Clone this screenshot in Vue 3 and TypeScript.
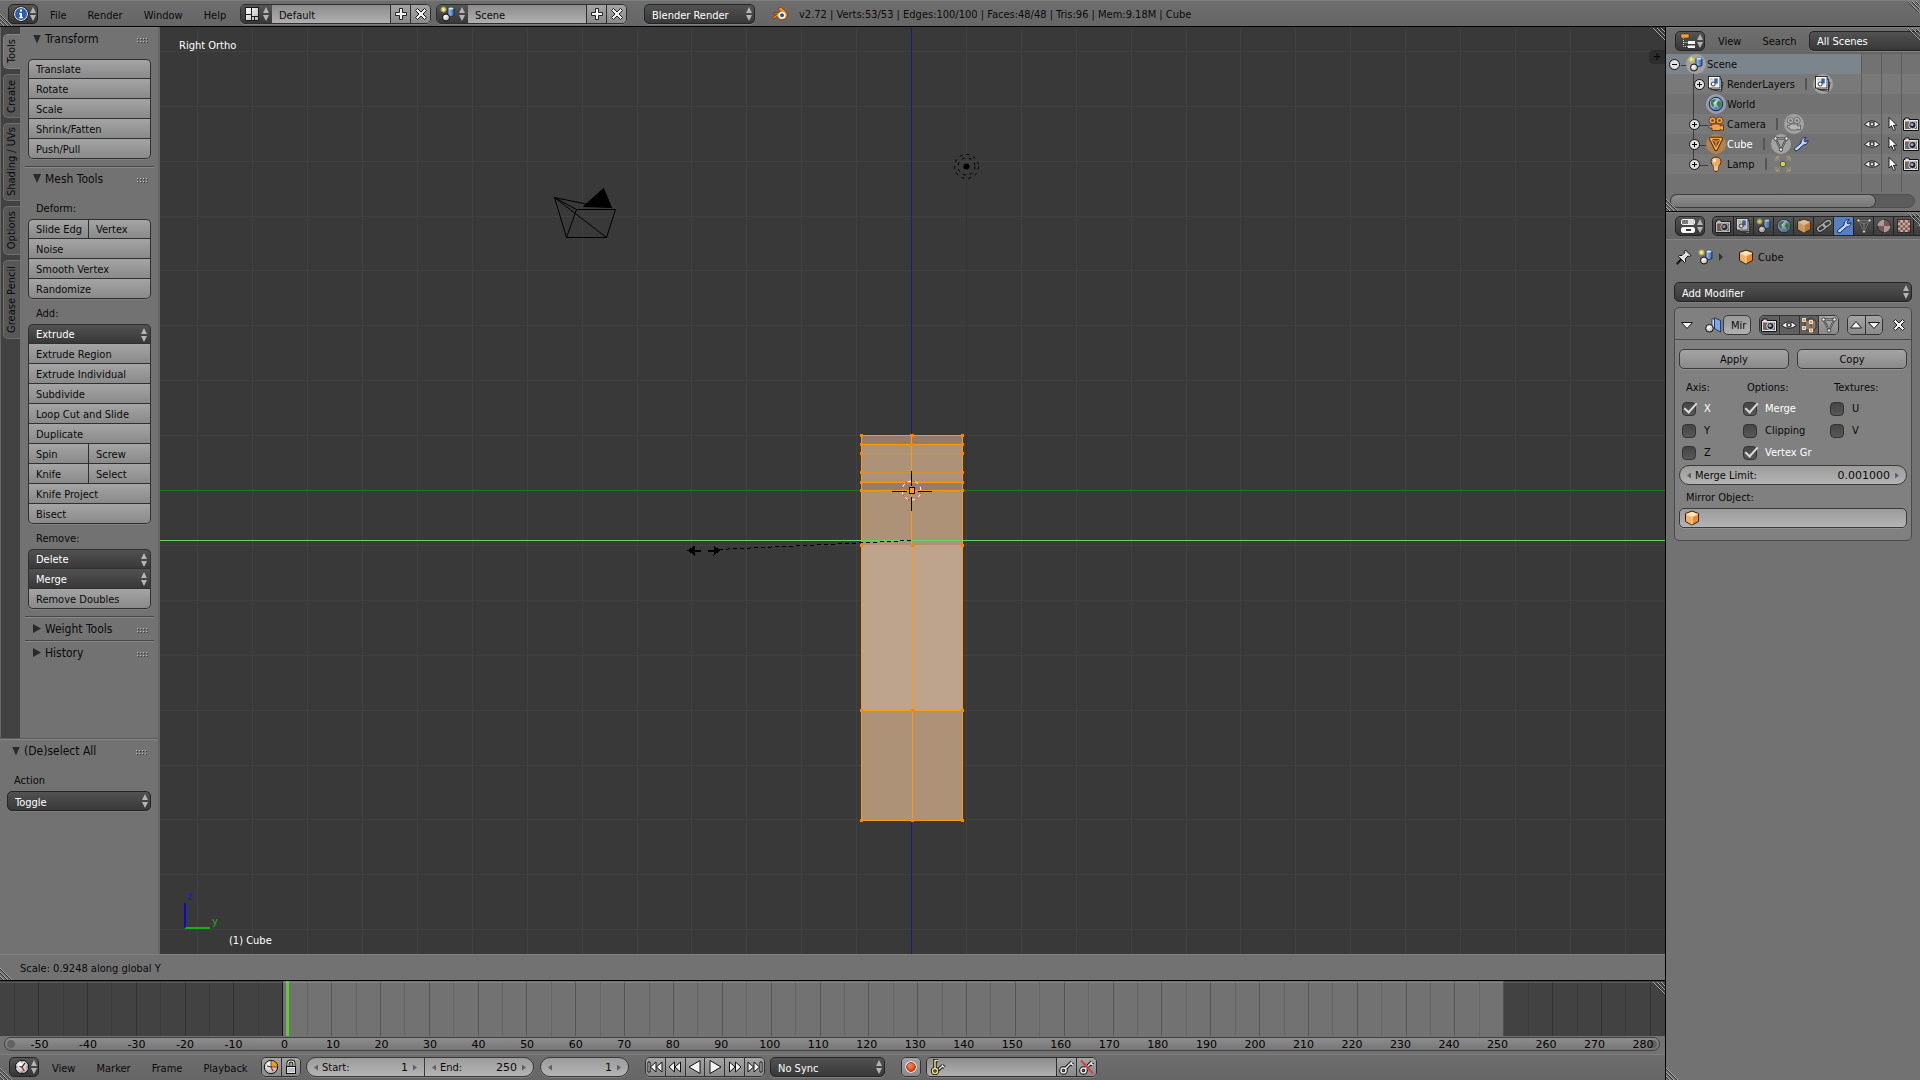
<script setup lang="ts">
import { ref } from 'vue'

interface ToolRow { cells: string[]; menu?: boolean }
interface ToolGroup { label?: string; rows: ToolRow[] }
interface TreeRow {
  name: string
  level: number
  toggle?: 'plus' | 'minus'
  near?: boolean
  icon: string
  halo?: string
  extras?: { icon: string; halo?: boolean }[]
  restrict?: boolean
  selected?: boolean
  bright?: boolean
}

const b = (...cells: string[]): ToolRow => ({ cells })
const m = (name: string): ToolRow => ({ cells: [name], menu: true })

const shelfTabs = [
  { name: 'Tools', size: 35, active: true },
  { name: 'Create', size: 44 },
  { name: 'Shading / UVs', size: 78 },
  { name: 'Options', size: 49 },
  { name: 'Grease Pencil', size: 79 },
]

const transform: ToolGroup[] = [
  { rows: [b('Translate'), b('Rotate'), b('Scale'), b('Shrink/Fatten'), b('Push/Pull')] },
]
const meshTools: ToolGroup[] = [
  { label: 'Deform:', rows: [b('Slide Edg', 'Vertex'), b('Noise'), b('Smooth Vertex'), b('Randomize')] },
  {
    label: 'Add:',
    rows: [
      m('Extrude'), b('Extrude Region'), b('Extrude Individual'), b('Subdivide'), b('Loop Cut and Slide'),
      b('Duplicate'), b('Spin', 'Screw'), b('Knife', 'Select'), b('Knife Project'), b('Bisect'),
    ],
  },
  { label: 'Remove:', rows: [m('Delete'), m('Merge'), b('Remove Doubles')] },
]
const panels = [
  { title: 'Transform', open: true, groups: transform },
  { title: 'Mesh Tools', open: true, groups: meshTools },
  { title: 'Weight Tools', open: false, groups: [] as ToolGroup[] },
  { title: 'History', open: false, groups: [] as ToolGroup[] },
]

const tree: TreeRow[] = [
  { name: 'Scene', level: 0, toggle: 'minus', icon: 'scene', halo: 'light', selected: true },
  { name: 'RenderLayers', level: 1, toggle: 'plus', near: true, icon: 'layers', extras: [{ icon: 'layers', halo: true }] },
  { name: 'World', level: 1, icon: 'world', halo: 'blue' },
  { name: 'Camera', level: 1, toggle: 'plus', icon: 'camera', extras: [{ icon: 'camera-data', halo: true }], restrict: true },
  { name: 'Cube', level: 1, toggle: 'plus', icon: 'mesh', halo: 'orange', bright: true, extras: [{ icon: 'mesh-data', halo: true }, { icon: 'wrench' }], restrict: true },
  { name: 'Lamp', level: 1, toggle: 'plus', icon: 'lamp', extras: [{ icon: 'lamp-data' }], restrict: true },
]

const propTabs = ['render', 'layers', 'scene', 'world', 'cube', 'link', 'wrench', 'mesh-data', 'material', 'texture', 'particles']

const axis = ref([{ name: 'X', on: true }, { name: 'Y', on: false }, { name: 'Z', on: false }])
const options = ref([{ name: 'Merge', on: true }, { name: 'Clipping', on: false }, { name: 'Vertex Gr', on: true }])
const textures = ref([{ name: 'U', on: false }, { name: 'V', on: false }])

const playback = ['first', 'prev-key', 'reverse', 'play', 'next-key', 'last']

/* Viewport grid, in pixels from the world origin */
const GRID = 54.9
const gridSteps = Array.from({ length: 61 }, (_, i) => Math.round((i - 30) * GRID)).filter((v) => v !== 0)

/* Mesh vertices drawn at the left edge, centre and right edge */
const vertexRows = [-55, -46, -37, -18, -8, 0, 55, 220, 330]

/* Timeline scale; the labels run on a slightly tighter pitch than the lines */
const FIRST = -57.9
const SPAN = 340.9
const at = (frame: number) => `${((frame - FIRST) / SPAN) * 100}%`
const labelAt = (frame: number) => `${(frame < 0 ? 16.94 : 17.09) + frame * 0.2914}%`
const minor = Array.from({ length: 34 }, (_, i) => -55 + i * 10)
const major = Array.from({ length: 34 }, (_, i) => -50 + i * 10)
</script>

<template>
  <svg class="defs" aria-hidden="true">
    <defs>
      <linearGradient id="g-blue" x1="0" x2="1"><stop offset="0" stop-color="#a9c9f5" /><stop offset="1" stop-color="#2f62b4" /></linearGradient>
      <linearGradient id="g-white" x1="0" y1="0" x2="1" y2="1"><stop offset="0" stop-color="#fff" /><stop offset="1" stop-color="#b5b5b5" /></linearGradient>
      <radialGradient id="g-ball" cx=".4" cy=".35" r=".7"><stop offset="0" stop-color="#fff" /><stop offset="1" stop-color="#a8a8a8" /></radialGradient>
      <radialGradient id="g-sun"><stop offset="0" stop-color="#fffbc0" /><stop offset=".5" stop-color="#d8cf50" /><stop offset="1" stop-color="#d8cf50" stop-opacity="0" /></radialGradient>
      <radialGradient id="g-world" cx=".4" cy=".35" r=".7"><stop offset="0" stop-color="#d4e6fb" /><stop offset="1" stop-color="#4672ab" /></radialGradient>
      <radialGradient id="g-red" cx=".4" cy=".35" r=".7"><stop offset="0" stop-color="#ff8a5c" /><stop offset="1" stop-color="#d62a00" /></radialGradient>
    </defs>

    <symbol id="i-updown" viewBox="0 0 8 14"><path d="M4 0 7 6H1ZM4 14 7 8H1Z" fill="#b4b4b4" /></symbol>
    <symbol id="i-grip" viewBox="0 0 12 12">
      <path d="M0 1 11 12M4 1 11 8M8 1 11 4" stroke="#303030" /><path d="M0 0 12 12M4 0 12 8M8 0 12 4" stroke="#a8a8a8" />
    </symbol>
    <symbol id="i-grip-bl" viewBox="0 0 12 12">
      <path d="M0 1 11 12M0 5 7 12M0 9 3 12" stroke="#303030" /><path d="M0 0 12 12M0 4 8 12M0 8 4 12" stroke="#a8a8a8" />
    </symbol>
    <symbol id="i-dots" viewBox="0 0 12 6">
      <path d="M0 1.5H12M0 4.5H12" stroke="#c0c0c0" stroke-dasharray="1 2" /><path d="M1 2.5H12M1 5.5H12" stroke="#3a3a3a" stroke-dasharray="1 2" />
    </symbol>
    <symbol id="i-info" viewBox="0 0 16 16">
      <circle cx="8" cy="8" r="6.500" fill="#2d5ea8" stroke="#fff" /><circle cx="8" cy="8" r="7.400" fill="none" stroke="#111" stroke-width=".6" />
      <path d="M7 3.500H9V5.500H7ZM6 7H9V11H10V12.300H6V11H7V8.300H6Z" fill="#fff" />
    </symbol>
    <symbol id="i-layout" viewBox="0 0 16 16">
      <rect x="1" y="1" width="14" height="14" fill="#1c1c1c" /><path d="M2 2H7V8H2ZM2 9H7V14H2ZM8 2H14V10H8ZM8 11H10V14H8ZM11 11H14V14H11Z" fill="url(#g-white)" />
    </symbol>
    <symbol id="i-scene" viewBox="0 0 16 16">
      <circle cx="3.500" cy="3.500" r="3.500" fill="url(#g-sun)" />
      <path d="M8 2.500Q11 .5 14 2.500V9.500Q11 12 8 9.500Z" fill="url(#g-blue)" stroke="#12264a" stroke-width=".8" /><ellipse cx="11" cy="2.600" rx="2.600" ry="1" fill="#dceaff" />
      <circle cx="6" cy="11.500" r="3.500" fill="url(#g-ball)" stroke="#111" />
    </symbol>
    <symbol id="i-plus" viewBox="0 0 16 16"><path d="M6.500 2.500H9.500V6.500H13.500V9.500H9.500V13.500H6.500V9.500H2.500V6.500H6.500Z" fill="#f4f4f4" stroke="#222" /></symbol>
    <symbol id="i-close" viewBox="0 0 16 16"><path d="M2.500 4.500 4.500 2.500 8 6 11.500 2.500 13.500 4.500 10 8 13.500 11.500 11.500 13.500 8 10 4.500 13.500 2.500 11.500 6 8Z" fill="#f0f0f0" stroke="#1a1a1a" /></symbol>
    <symbol id="i-blender" viewBox="0 0 16 16">
      <path d="M7 1.500 9 1 14.500 6Q16 8 15.500 10 14 14 10 14 6 14 5 10.500L2 13 .7 11.500 5 8H1.500L2 6.500H7.500L8.500 5.500 6.500 3.500Z" fill="#f08a1c" stroke="#5a2c00" stroke-width=".6" />
      <circle cx="10" cy="9.300" r="3.500" fill="#fff" /><circle cx="10" cy="9.300" r="2" fill="#1b5aa8" />
    </symbol>
    <symbol id="i-tree" viewBox="0 0 16 16">
      <path d="M3.500 5V13.500H8M3.500 9.500H8" fill="none" stroke="#ddd" stroke-dasharray="1 1" /><rect x="1" y="1" width="8" height="4" fill="#f0a040" stroke="#5a3000" stroke-width=".6" />
      <path d="M8 8H15V11H8ZM8 12.500H15V15H8Z" fill="#f4f4f4" />
    </symbol>
    <symbol id="i-props" viewBox="0 0 16 16">
      <rect x="1.500" y="1.500" width="13" height="5" rx="1.500" fill="#777" stroke="#eee" /><path d="M8 2H13Q14 2 14 4T13 6H8Z" fill="#ddd" />
      <rect x="1.500" y="9.500" width="13" height="5" rx="1.500" fill="#fff" stroke="#eee" /><path d="M6 11H11V13H6Z" fill="#333" />
    </symbol>
    <symbol id="i-clock" viewBox="0 0 16 16">
      <circle cx="8" cy="8" r="6.700" fill="url(#g-ball)" stroke="#111" /><path d="M8 2V3.500M8 12.500V14M2 8H3.500M12.500 8H14" stroke="#555" />
      <path d="M11 4 8 8 5.500 7.500" fill="none" stroke="#222" stroke-width="1.200" /><path d="M8 8 10 12" stroke="#d02020" stroke-width="1.500" />
    </symbol>
    <symbol id="i-clock-range" viewBox="0 0 16 16">
      <circle cx="8" cy="8" r="6.700" fill="url(#g-ball)" stroke="#111" /><path d="M8 1.300A6.700 6.700 0 0 1 14.700 8H8Z" fill="#f59a17" stroke="#111" stroke-width=".6" />
      <path d="M8 8 4 7" stroke="#222" /><path d="M8 8 10 12" stroke="#d02020" stroke-width="1.500" />
    </symbol>
    <symbol id="i-lock" viewBox="0 0 16 16">
      <path d="M5 8V4.500Q5 2 8 2T11 4.500V8" fill="none" stroke="#111" stroke-width="3" /><path d="M5 8V4.500Q5 2 8 2T11 4.500V8" fill="none" stroke="#eee" stroke-width="1.200" />
      <rect x="3.500" y="7.500" width="9" height="7" fill="#dfe4ea" stroke="#111" /><path d="M4.500 10H11.500M4.500 12H11.500" stroke="#8d98a6" />
    </symbol>
    <symbol id="i-layers" viewBox="0 0 16 16">
      <path d="M5 5 15 6.500 13.500 15.300 5 14Z" fill="#d9d3ac" stroke="#111" stroke-width=".8" /><path d="M3 3H13.500V13.500H3Z" fill="#eee" stroke="#111" stroke-width=".8" />
      <rect x=".5" y=".5" width="11.500" height="11.500" fill="#fff" stroke="#111" stroke-width=".8" /><rect x="2" y="2" width="8.500" height="8.500" fill="#dce8f8" />
      <rect x="6.300" y="2.500" width="3.400" height="5" fill="#2f62b4" /><circle cx="5.200" cy="8" r="2" fill="#fff" stroke="#111" stroke-width=".8" /><circle cx="3.500" cy="3.500" r="1" fill="#d8c840" />
    </symbol>
    <symbol id="i-world" viewBox="0 0 16 16">
      <circle cx="8" cy="8" r="6.800" fill="url(#g-world)" stroke="#14263f" />
      <path d="M3 5Q5 2.500 8 3L7 5.500 5 7 6 9 5 11Q2.500 9 3 5ZM10 5 13 5.500Q14 8 13 10L11 12 10 10 8.500 8ZM7 11 9 12 8 13.500Z" fill="#3f7d3c" />
    </symbol>
    <symbol id="i-camera" viewBox="0 0 16 16">
      <g fill="#f0a050" stroke="#5a2c00" stroke-width=".8"><circle cx="4.500" cy="4.500" r="3.500" /><circle cx="11.500" cy="4.500" r="3.500" /><path d="M4 8H12V10L15.500 9V14.500L12 13.500V14.500H4V12H1V9.500H4Z" /></g>
      <circle cx="4.500" cy="4.500" r="1.300" fill="#7a3a00" /><circle cx="11.500" cy="4.500" r="1.300" fill="#7a3a00" />
    </symbol>
    <symbol id="i-camera-data" viewBox="0 0 16 16">
      <g fill="#b5b5b5" stroke="#5c5c5c" stroke-width=".8"><circle cx="4.500" cy="4.500" r="3.200" /><circle cx="11" cy="4.500" r="3.200" /><path d="M4 8H11.500V10L14.500 9V14L11.500 13V14H4V12H1.500V9.500H4Z" /></g>
      <circle cx="4.500" cy="4.500" r="1.200" fill="#666" /><circle cx="11" cy="4.500" r="1.200" fill="#666" />
    </symbol>
    <symbol id="i-mesh" viewBox="0 0 16 16">
      <path d="M2.500 2.500H13.500L8 13.500Z" fill="none" stroke="#4a2500" stroke-width="3.400" stroke-linejoin="round" /><path d="M2.500 2.500 8 6 13.500 2.500M8 6V13" fill="none" stroke="#4a2500" stroke-width="1" />
      <path d="M2.500 2.500H13.500L8 13.500Z" fill="none" stroke="#ffa54a" stroke-width="1.600" stroke-linejoin="round" /><path d="M3 3 8 6 13 3M8 6V13" fill="none" stroke="#ffc58a" stroke-width=".8" />
    </symbol>
    <symbol id="i-mesh-data" viewBox="0 0 16 16">
      <path d="M2.500 2.500H13.500L8 13.500Z" fill="none" stroke="#333" stroke-width="2" /><path d="M2.500 2.500H13.500L8 13.500ZM2.500 2.500 8 6 13.500 2.500M8 6V13.500" fill="none" stroke="#a8a8a8" stroke-width=".8" />
      <g fill="#f4f4f4" stroke="#222" stroke-width=".8"><circle cx="2.500" cy="2.500" r="1.700" /><circle cx="13.500" cy="2.500" r="1.700" /><circle cx="8" cy="13.500" r="1.700" /></g>
    </symbol>
    <symbol id="i-lamp" viewBox="0 0 16 16">
      <path d="M5.500 10.500Q3 8 3 5.500 3.500 1 8 1T13 5.500Q13 8 10.500 10.500V14L9 15.500H7L5.500 14Z" fill="#f2a95e" stroke="#4a2500" stroke-width=".9" />
      <ellipse cx="6.500" cy="4.500" rx="1.500" ry="2" fill="#fff0d8" /><path d="M5.500 11H10.500M5.500 13H10.500" stroke="#ddd" />
    </symbol>
    <symbol id="i-lamp-data" viewBox="0 0 16 16">
      <circle cx="8" cy="8" r="2.800" fill="#d6cf6a" stroke="#55552a" /><path d="M1 5V1H5M1 1 4.500 4.500M11 1H15V5M15 1 11.500 4.500M1 11V15H5M1 15 4.500 11.500M15 11V15H11M15 15 11.500 11.500" fill="none" stroke="#a9a561" />
    </symbol>
    <symbol id="i-wrench" viewBox="0 0 16 16">
      <path d="M1.500 12.500 8 7Q7.500 3.500 10.500 2L13 1.500 11 4.500 12 6 15 4.500Q15 8.500 10.500 9L4 14.800Q1 15.500 1.500 12.500Z" fill="#bcd4fa" stroke="#152c5c" />
    </symbol>
    <symbol id="i-eye" viewBox="0 0 16 16">
      <path d="M.5 8.500Q8 1 15.500 8.500 8 14 .5 8.500Z" fill="#f2f2f2" stroke="#1a1a1a" /><circle cx="8" cy="8" r="2.800" fill="#444" /><circle cx="8" cy="8" r="1.200" fill="#ddd" />
    </symbol>
    <symbol id="i-cursor" viewBox="0 0 16 16"><path d="M5 1.500V12L7.500 9.800 9.500 14.500 11.300 13.700 9.400 9.300H12.800Z" fill="#fff" stroke="#111" stroke-width=".9" /></symbol>
    <symbol id="i-render" viewBox="0 0 16 16">
      <path d="M.5 3.500H2V2H6V3.500H15.500V14.500H.5Z" fill="#e4e4e4" stroke="#111" /><rect x="2" y="5.500" width="12" height="7.500" fill="#6a6a6a" />
      <circle cx="9.500" cy="9" r="3.700" fill="#222" stroke="#f4f4f4" stroke-width=".9" /><circle cx="9" cy="8.500" r="1.600" fill="#8fb0dc" /><rect x="2.500" y="6" width="2" height="1.500" fill="#e83030" />
    </symbol>
    <symbol id="i-cube" viewBox="0 0 16 16">
      <path d="M8 1 14.500 3.500V11.500L8 15 1.500 11.500V3.500Z" fill="#e8902e" stroke="#3a1d00" /><path d="M8 1.700 13.700 4 8 6.500 2.300 4Z" fill="#ffe4bd" /><path d="M2.200 4.700 7.600 7V14.200L2.200 11.200Z" fill="#f6b267" /><path d="M2 4 8 6.800 14 4M8 6.800V14.500" fill="none" stroke="#fff3e0" stroke-width=".8" />
    </symbol>
    <symbol id="i-link" viewBox="0 0 16 16">
      <g fill="none" stroke="#222" stroke-width="3.200"><rect x="1.500" y="8" width="8" height="4.500" rx="2.200" transform="rotate(-35 5 10)" /><rect x="7" y="3.500" width="8" height="4.500" rx="2.200" transform="rotate(-35 11 6)" /></g>
      <g fill="none" stroke="#ccc" stroke-width="1.400"><rect x="1.500" y="8" width="8" height="4.500" rx="2.200" transform="rotate(-35 5 10)" /><rect x="7" y="3.500" width="8" height="4.500" rx="2.200" transform="rotate(-35 11 6)" /></g>
    </symbol>
    <symbol id="i-material" viewBox="0 0 16 16">
      <circle cx="8" cy="8" r="6.500" fill="#8a5a58" stroke="#222" /><path d="M8 1.500A6.500 6.500 0 0 0 1.500 8H8ZM8 14.500A6.500 6.500 0 0 0 14.500 8H8Z" fill="#c9b5b2" />
    </symbol>
    <symbol id="i-texture" viewBox="0 0 16 16">
      <rect x="1.500" y="1.500" width="13" height="13" fill="#e8ded8" stroke="#222" /><path d="M2 3.500H14M2 8.500H14M2 13H14" stroke="#a3503f" stroke-width="2.400" stroke-dasharray="2.400 2.400" /><path d="M4.400 6H14M4.400 10.800H14" stroke="#a3503f" stroke-width="2.400" stroke-dasharray="2.400 2.400" />
    </symbol>
    <symbol id="i-particles" viewBox="0 0 16 16"><path d="M6 1 7.500 5.500 12 7 7.500 8.500 6 13 4.500 8.500 0 7 4.500 5.500Z" fill="#e8d890" stroke="#444" stroke-width=".6" /></symbol>
    <symbol id="i-pin" viewBox="0 0 16 16">
      <path d="M.8 15.200 5.500 10" stroke="#111" stroke-width="2" /><path d="M9.500 1 15 6.500 13.500 7.500 12 7 9.500 9.500 9.500 12.500 8.500 13.500 2.500 7.500 3.500 6.500H6.500L9 4 8.500 2.500Z" fill="#ddd" stroke="#111" /><path d="M5.500 8 10 3.800" stroke="#fff" />
    </symbol>
    <symbol id="i-mirror" viewBox="0 0 16 16">
      <path d="M7 1.500 9.500 2.500V12L7 9Z" fill="#c4daf8" stroke="#12264a" stroke-width=".7" /><path d="M9.500 .8 15.500 3.500V15.200L9.500 11.500Z" fill="#7ea6e6" stroke="#12264a" stroke-width=".8" />
      <circle cx="4.500" cy="11.300" r="3.800" fill="url(#g-ball)" stroke="#111" />
    </symbol>
    <symbol id="i-editmode" viewBox="0 0 16 16">
      <path d="M6 3 10 1 15 4V11L10 15 4 12V3Z" fill="#8a7968" stroke="#3a322a" /><path d="M4 3H10V14M10 4 15 3" stroke="#55483a" fill="none" />
      <g fill="#ff8c1a" stroke="#fff" stroke-width=".8"><path d="M1.500 1.500H4.500V4.500H1.500ZM8.500 3.500H11.500V6.500H8.500ZM1.500 9.500H4.500V12.500H1.500ZM8.500 12H11.500V15H8.500Z" /></g>
    </symbol>
    <symbol id="i-tri-down" viewBox="0 0 16 16"><path d="M2.500 5.500H13.500L8 11.500Z" fill="#f2f2f2" stroke="#1a1a1a" /></symbol>
    <symbol id="i-tri-up" viewBox="0 0 16 16"><path d="M2.500 11H13.500L8 4.500Z" fill="#f2f2f2" stroke="#1a1a1a" /></symbol>
    <symbol id="i-play" viewBox="0 0 16 16"><path d="M3 1.500 14 8 3 14.500Z" fill="#f4f4f4" stroke="#111" /></symbol>
    <symbol id="i-reverse" viewBox="0 0 16 16"><path d="M13 1.500 2 8 13 14.500Z" fill="#f4f4f4" stroke="#111" /></symbol>
    <symbol id="i-next-key" viewBox="0 0 16 16"><path d="M2.500 3 8 8 2.500 13ZM8.500 3 14 8 8.500 13Z" fill="#f4f4f4" stroke="#111" /></symbol>
    <symbol id="i-prev-key" viewBox="0 0 16 16"><path d="M13.500 3 8 8 13.500 13ZM7.500 3 2 8 7.500 13Z" fill="#f4f4f4" stroke="#111" /></symbol>
    <symbol id="i-last" viewBox="0 0 16 16"><path d="M1 3 6.500 8 1 13ZM7 3 12.500 8 7 13ZM13 3H15V13H13Z" fill="#f4f4f4" stroke="#111" /></symbol>
    <symbol id="i-first" viewBox="0 0 16 16"><path d="M15 3 9.500 8 15 13ZM9 3 3.500 8 9 13ZM1 3H3V13H1Z" fill="#f4f4f4" stroke="#111" /></symbol>
    <symbol id="i-record" viewBox="0 0 16 16"><circle cx="8" cy="8" r="5" fill="url(#g-red)" stroke="#fff" stroke-width="1.500" /><circle cx="8" cy="8" r="4.500" fill="none" stroke="#7a1800" stroke-width=".8" /></symbol>
    <symbol id="i-key" viewBox="0 0 16 16">
      <path d="M6 10 13 3M11 4 14 6" stroke="#111" stroke-width="3.600" /><circle cx="4.500" cy="11.500" r="2.500" fill="none" stroke="#111" stroke-width="3.600" />
      <path d="M6 10 13 3M11 4 14 6" stroke="#e8e8e8" stroke-width="1.600" /><circle cx="4.500" cy="11.500" r="2.500" fill="none" stroke="#e8e8e8" stroke-width="1.600" />
    </symbol>
    <symbol id="i-key-del" viewBox="0 0 16 16"><use href="#i-key" /><path d="M2 1.500 14 14.500" stroke="#d64040" stroke-width="2" /></symbol>
    <symbol id="i-keyset" viewBox="0 0 16 16">
      <path d="M8 11 13 6.500M12 6.500 14.500 8.500" stroke="#111" stroke-width="3.400" /><path d="M8 11 13 6.500M12 6.500 14.500 8.500" stroke="#e8e8e8" stroke-width="1.500" />
      <path d="M5 9V1.500H8" fill="none" stroke="#111" stroke-width="3.400" /><circle cx="5" cy="12" r="2.500" fill="none" stroke="#111" stroke-width="3.400" />
      <path d="M5 9V1.500H8" fill="none" stroke="#f0e08a" stroke-width="1.500" /><circle cx="5" cy="12" r="2.500" fill="none" stroke="#f0e08a" stroke-width="1.500" />
    </symbol>
  </svg>

  <div class="app">
    <header class="bar top">
      <svg class="grip bl"><use href="#i-grip-bl" /></svg>
      <button class="editor" aria-label="Editor type"><svg class="ic"><use href="#i-info" /></svg><svg class="ud"><use href="#i-updown" /></svg></button>
      <nav class="menus">
        <button>File</button><button>Render</button><button>Window</button><button>Help</button>
      </nav>
      <div class="idblock">
        <button class="pick" aria-label="Browse screens"><svg class="ic"><use href="#i-layout" /></svg><svg class="ud"><use href="#i-updown" /></svg></button>
        <input type="text" value="Default" aria-label="Screen" />
        <button class="sq" aria-label="Add screen"><svg class="ic"><use href="#i-plus" /></svg></button>
        <button class="sq" aria-label="Delete screen"><svg class="ic"><use href="#i-close" /></svg></button>
      </div>
      <div class="idblock">
        <button class="pick" aria-label="Browse scenes"><svg class="ic"><use href="#i-scene" /></svg><svg class="ud"><use href="#i-updown" /></svg></button>
        <input type="text" value="Scene" aria-label="Scene" />
        <button class="sq" aria-label="Add scene"><svg class="ic"><use href="#i-plus" /></svg></button>
        <button class="sq" aria-label="Delete scene"><svg class="ic"><use href="#i-close" /></svg></button>
      </div>
      <div class="drop engine">
        <select aria-label="Render engine"><option>Blender Render</option></select><svg class="ud"><use href="#i-updown" /></svg>
      </div>
      <svg class="ic logo"><use href="#i-blender" /></svg>
      <span class="stats">v2.72 | Verts:53/53 | Edges:100/100 | Faces:48/48 | Tris:96 | Mem:9.18M | Cube</span>
      <svg class="grip tr"><use href="#i-grip" /></svg>
    </header>

    <div class="work">
      <div class="left">
        <div class="view3d">
          <aside class="shelf">
            <div class="shelf-main">
              <div class="tabs">
                <button v-for="t in shelfTabs" :key="t.name" :class="{ on: t.active }" :style="{ height: t.size + 'px' }"><span>{{ t.name }}</span></button>
              </div>
              <div class="panels">
                <section v-for="p in panels" :key="p.title" class="panel">
                  <h2><span class="tri" :class="{ shut: !p.open }"></span>{{ p.title }}<svg class="dots"><use href="#i-dots" /></svg></h2>
                  <div v-if="p.open" class="body">
                    <template v-for="(g, gi) in p.groups" :key="gi">
                      <p v-if="g.label" class="label">{{ g.label }}</p>
                      <div class="stack">
                        <div v-for="r in g.rows" :key="r.cells[0]" class="row">
                          <button v-for="c in r.cells" :key="c" :class="{ menu: r.menu, half: r.cells.length > 1 }">{{ c }}<svg v-if="r.menu" class="ud"><use href="#i-updown" /></svg></button>
                        </div>
                      </div>
                    </template>
                  </div>
                </section>
              </div>
            </div>
            <section class="operator">
              <h2><span class="tri"></span>(De)select All<svg class="dots"><use href="#i-dots" /></svg></h2>
              <label class="label" for="action">Action</label>
              <div class="drop"><select id="action"><option>Toggle</option></select><svg class="ud"><use href="#i-updown" /></svg></div>
            </section>
          </aside>

          <main class="viewport">
            <svg class="canvas" width="100%" height="100%">
              <svg x="50%" y="50%" overflow="visible" shape-rendering="crispEdges">
                <g transform="translate(-1 0)">
                  <g stroke="#414141">
                    <line v-for="v in gridSteps" :key="'v' + v" :x1="v" :x2="v" y1="-2000" y2="2000" />
                    <line v-for="h in gridSteps" :key="'h' + h" :y1="h" :y2="h" x1="-3000" x2="3000" />
                  </g>
                  <line x1="55" x2="55" y1="-318" y2="0" stroke="#333" />
                  <line x1="-3000" x2="3000" y1="0" y2="0" stroke="#0f8010" />
                  <line y1="-2000" y2="2000" x1="0" x2="0" stroke="#1b1b86" />

                  <g transform="translate(-.5 -.5)">
                    <rect x="-50" y="-55" width="101" height="9" fill="#987b66" />
                    <rect x="-50" y="-46" width="101" height="38" fill="#ae9278" />
                    <rect x="-50" y="-8" width="101" height="8" fill="#957c70" />
                    <rect x="-50" y="0" width="101" height="55" fill="#ae9278" />
                    <rect x="-50" y="55" width="101" height="165" fill="#bfa48d" />
                    <rect x="-50" y="220" width="101" height="110" fill="#ae9278" />
                  </g>
                  <line x1="-3000" x2="3000" y1="50" y2="50" stroke="#62d862" />
                  <path d="M-50-37H51M-50-18H51" stroke="#cf9240" />
                  <path d="M-50-55H51M-50-46H51M-50-8H51M-50 0H51M-50 55H51M-50 220H51M-50 330H51M-50-55V330M51-55V330M0-55V55M1 55V330" stroke="#ff9a0e" fill="none" />
                  <g fill="#ff8500" transform="translate(-.5 -.5)">
                    <template v-for="y in vertexRows" :key="y">
                      <rect x="-51" :y="y - 1" width="3" height="3" /><rect x="50" :y="y - 1" width="3" height="3" />
                    </template>
                    <rect x="-1" y="-56" width="4" height="3" /><rect x="-1" y="-47" width="3" height="3" /><rect x="0" y="54" width="3" height="3" />
                    <rect x="0" y="219" width="3" height="3" /><rect x="0" y="329" width="3" height="3" />
                  </g>
                </g>
                <g transform="translate(-1 0)" shape-rendering="auto">
                  <circle cx="0" cy="0" r="9.500" fill="none" stroke="#fff" /><circle cx="0" cy="0" r="9.500" fill="none" stroke="#f01818" stroke-dasharray="3.700 3.700" />
                </g>
                <g transform="translate(-1 0)">
                  <path d="M0-20V-5M0 6V20M-20 1H-5M6 1H20" stroke="#000" />
                  <rect x="-2" y="-3" width="5" height="6" fill="#ff9a2c" stroke="#1a0e00" />
                  <path d="M0 50-194 59" stroke="#000" stroke-dasharray="4 3" />
                  <path d="M-224 60-217 55V59H-211V61H-217V65ZM-191 60-198 55V59H-204V61H-198V65Z" fill="#000" />
                  <g stroke="#000" fill="none" shape-rendering="auto">
                    <path d="M-357-293-335-281H-296L-305-253H-345ZM-335-281-345-253M-357-293-305-253M-357-293-323-286" />
                    <path d="M-308-302-328-284-300-283Z" fill="#000" />
                    <circle cx="55" cy="-324" r="12" stroke-dasharray="3 4" /><circle cx="55" cy="-324" r="8.500" stroke-dasharray="3 4" /><circle cx="55" cy="-324" r="3" fill="#000" stroke="none" />
                  </g>
                </g>
              </svg>
            </svg>
            <span class="view-name">Right Ortho</span>
            <button class="expand" aria-label="Show properties region">+</button>
            <svg class="grip tr"><use href="#i-grip" /></svg>
            <div class="gizmo">
              <span class="z">z</span><span class="y">y</span>
            </div>
            <span class="object-name">(1) Cube</span>
          </main>
        </div>

        <div class="status">Scale: 0.9248 along global Y<svg class="grip bl"><use href="#i-grip-bl" /></svg></div>

        <section class="timeline">
          <svg class="frames" width="100%" height="55">
            <rect width="100%" height="55" fill="#424242" />
            <rect :x="at(0)" :width="`${(250 / SPAN) * 100}%`" height="55" fill="#727272" />
            <g shape-rendering="crispEdges">
              <line v-for="f in minor" :key="f" :x1="at(f)" :x2="at(f)" y2="55" stroke="#000" stroke-opacity=".1" />
              <line v-for="f in major" :key="f" :x1="at(f)" :x2="at(f)" y2="55" stroke="#000" stroke-opacity=".24" />
              <line :x1="at(0)" :x2="at(0)" y2="55" stroke="#151515" />
              <line :x1="at(1)" :x2="at(1)" y2="55" stroke="#5fc83c" stroke-width="3" />
              <line x2="100%" y1="1" y2="1" stroke="#fff" stroke-opacity=".12" />
            </g>
          </svg>
          <svg class="grip tr"><use href="#i-grip" /></svg>
          <div class="ruler">
            <div class="track"><i class="knob"></i><i class="knob"></i></div>
            <svg width="100%" height="16"><text v-for="f in major" :key="f" :x="labelAt(f)" y="11" text-anchor="middle">{{ f <= 280 ? f : '' }}</text></svg>
          </div>
          <div class="bar foot">
            <svg class="grip bl"><use href="#i-grip-bl" /></svg>
            <button class="editor" aria-label="Editor type"><svg class="ic"><use href="#i-clock" /></svg><svg class="ud"><use href="#i-updown" /></svg></button>
            <nav class="menus">
              <button>View</button><button>Marker</button><button>Frame</button><button>Playback</button>
            </nav>
            <div class="group range">
              <button class="sq" aria-label="Use preview range"><svg class="ic"><use href="#i-clock-range" /></svg></button>
              <button class="sq" aria-label="Lock time to range"><svg class="ic"><use href="#i-lock" /></svg></button>
            </div>
            <div class="pill">
              <label class="num start"><i class="la"></i>Start:<input type="text" value="1" /><i class="ra"></i></label>
              <label class="num end"><i class="la"></i>End:<input type="text" value="250" /><i class="ra"></i></label>
            </div>
            <div class="pill">
              <label class="num now"><i class="la"></i><input type="text" value="1" aria-label="Current frame" /><i class="ra"></i></label>
            </div>
            <div class="group play">
              <button v-for="k in playback" :key="k" :aria-label="k"><svg class="ic"><use :href="'#i-' + k" /></svg></button>
            </div>
            <div class="drop sync"><select aria-label="Sync mode"><option>No Sync</option></select><svg class="ud"><use href="#i-updown" /></svg></div>
            <div class="group record"><button aria-label="Record"><svg class="ic"><use href="#i-record" /></svg></button></div>
            <div class="idblock keying">
              <svg class="ic keyset"><use href="#i-keyset" /></svg>
              <input type="text" value="" aria-label="Keying set" />
              <button class="sq" aria-label="Insert keyframe"><svg class="ic"><use href="#i-key" /></svg></button>
              <button class="sq" aria-label="Delete keyframe"><svg class="ic"><use href="#i-key-del" /></svg></button>
            </div>
          </div>
        </section>
      </div>

      <aside class="right">
        <section class="outliner">
          <div class="bar sub">
            <button class="editor" aria-label="Editor type"><svg class="ic"><use href="#i-tree" /></svg><svg class="ud"><use href="#i-updown" /></svg></button>
            <nav class="menus"><button>View</button><button>Search</button></nav>
            <div class="drop scenes"><select aria-label="Display mode"><option>All Scenes</option></select></div>
            <svg class="grip tr"><use href="#i-grip" /></svg>
          </div>
          <div class="tree">
            <svg class="links" width="60" height="120" shape-rendering="crispEdges"><path d="M15 11H24M27 20V112M33 71H42M33 91H42M33 111H42" stroke="#3c3c3c" fill="none" /></svg>
            <div v-for="r in tree" :key="r.name" class="item" :class="{ sel: r.selected, bright: r.bright }">
              <div class="name">
                <span class="lead" :class="{ deep: r.level, near: r.near }"><button v-if="r.toggle" class="toggle" :class="r.toggle" :aria-label="'Expand ' + r.name"></button></span>
                <span class="halo" :class="r.halo"><svg class="ic"><use :href="'#i-' + r.icon" /></svg></span>
                <span class="text">{{ r.name }}</span>
                <template v-if="r.extras">
                  <span class="sep"></span>
                  <span v-for="e in r.extras" :key="e.icon" class="halo" :class="{ light: e.halo }"><svg class="ic"><use :href="'#i-' + e.icon" /></svg></span>
                </template>
              </div>
              <div v-for="k in ['eye', 'cursor', 'render']" :key="k" class="cell"><svg v-if="r.restrict" class="ic"><use :href="'#i-' + k" /></svg></div>
            </div>
            <div class="item rest"><div class="name"></div><div class="cell"></div><div class="cell"></div><div class="cell"></div></div>
          </div>
          <div class="scroll"><div class="thumb"></div></div>
          <svg class="grip bl"><use href="#i-grip-bl" /></svg>
        </section>

        <section class="props">
          <div class="bar sub">
            <button class="editor" aria-label="Editor type"><svg class="ic"><use href="#i-props" /></svg><svg class="ud"><use href="#i-updown" /></svg></button>
            <div class="contexts">
              <button v-for="t in propTabs" :key="t" :class="{ on: t === 'wrench' }" :aria-label="t"><svg class="ic"><use :href="'#i-' + t" /></svg></button>
            </div>
            <svg class="grip tr"><use href="#i-grip" /></svg>
          </div>
          <div class="crumbs">
            <svg class="ic"><use href="#i-pin" /></svg>
            <svg class="ic sc"><use href="#i-scene" /></svg>
            <i class="ra"></i>
            <svg class="ic cu"><use href="#i-cube" /></svg>
            <span>Cube</span>
          </div>
          <div class="stackcol">
            <div class="drop addmod"><select aria-label="Add Modifier"><option>Add Modifier</option></select><svg class="ud"><use href="#i-updown" /></svg></div>
            <div class="modifier">
              <div class="mod-head">
                <svg class="ic"><use href="#i-tri-down" /></svg>
                <svg class="ic mi"><use href="#i-mirror" /></svg>
                <input class="mod-name" type="text" value="Mir" aria-label="Modifier name" />
                <div class="group toggles">
                  <button class="on" aria-label="Render"><svg class="ic"><use href="#i-render" /></svg></button>
                  <button class="on" aria-label="Realtime"><svg class="ic"><use href="#i-eye" /></svg></button>
                  <button class="on" aria-label="Edit mode"><svg class="ic"><use href="#i-editmode" /></svg></button>
                  <button aria-label="On cage"><svg class="ic"><use href="#i-mesh-data" /></svg></button>
                </div>
                <div class="group move">
                  <button aria-label="Move up"><svg class="ic"><use href="#i-tri-up" /></svg></button>
                  <button aria-label="Move down"><svg class="ic"><use href="#i-tri-down" /></svg></button>
                </div>
                <button class="plain" aria-label="Remove modifier"><svg class="ic"><use href="#i-close" /></svg></button>
              </div>
              <div class="mod-body">
                <div class="pair"><button class="btn">Apply</button><button class="btn">Copy</button></div>
                <div class="checks">
                  <fieldset class="c1"><legend>Axis:</legend><label v-for="o in axis" :key="o.name" :class="{ lit: o.on }"><input v-model="o.on" type="checkbox" />{{ o.name }}</label></fieldset>
                  <fieldset class="c2"><legend>Options:</legend><label v-for="o in options" :key="o.name" :class="{ lit: o.on }"><input v-model="o.on" type="checkbox" />{{ o.name }}</label></fieldset>
                  <fieldset class="c3"><legend>Textures:</legend><label v-for="o in textures" :key="o.name" :class="{ lit: o.on }"><input v-model="o.on" type="checkbox" />{{ o.name }}</label></fieldset>
                </div>
                <div class="pill wide"><label class="num"><i class="la"></i>Merge Limit:<input type="text" value="0.001000" /><i class="ra"></i></label></div>
                <label class="label" for="mirror">Mirror Object:</label>
                <div class="objfield"><svg class="ic"><use href="#i-cube" /></svg><input id="mirror" type="text" value="" /></div>
              </div>
            </div>
          </div>
          <svg class="grip bl"><use href="#i-grip-bl" /></svg>
        </section>
      </aside>
    </div>
  </div>
</template>

<style>
body { margin: 0; background: #727272; }
</style>

<style scoped>
.defs { position: absolute; width: 0; height: 0; }
.app, .app button, .app input, .app select {
  font-family: "DejaVu Sans Condensed", "DejaVu Sans", sans-serif;
  font-size: 11px;
  color: #0a0a0a;
}
.app { display: flex; flex-direction: column; min-height: 100vh; line-height: 16px; background: #727272; }
.app * { box-sizing: border-box; }
button, input, select { margin: 0; padding: 0; border: 0; background: none; outline: 0; }
select { appearance: none; }
h2, p { margin: 0; font-weight: normal; }
.ic { width: 16px; height: 16px; flex: none; }
.ud { width: 8px; height: 14px; flex: none; }
.grip { position: absolute; width: 12px; height: 12px; }
.grip.tr { top: 1px; right: 0; }
.grip.bl { bottom: 0; left: 0; }
.label { display: block; height: 21px; line-height: 22px; padding-left: 8px; }

/* Header bars */
.bar { position: relative; display: flex; align-items: center; flex: none; background: linear-gradient(#6e6e6e, #666); box-shadow: inset 0 1px #7e7e7e; }
.top { height: 27px; padding: 2px 0 0 8px; border-bottom: 1px solid #000; }
.editor, .pick { display: flex; align-items: center; justify-content: space-between; width: 31px; height: 20px; padding: 0 2px 0 4px; background: linear-gradient(#555, #363636); }
.editor { width: 30px; border: 1px solid #242424; border-radius: 5px; flex: none; }
.menus { display: flex; }
.menus button { margin-right: 21px; padding-top: 2px; white-space: nowrap; }
.top .menus { padding-left: 12px; width: 202px; }
.idblock { display: flex; height: 20px; border: 1px solid #2e2e2e; border-radius: 5px; overflow: hidden; box-shadow: 0 1px #808080; }
.top .idblock { width: 191px; margin-right: 5px; }
.idblock .pick { height: 18px; padding-left: 3px; }
.idblock input { flex: 1; min-width: 0; padding: 2px 7px 0; background: linear-gradient(#8c8c8c, #b0b0b0); }
.sq { width: 20px; flex: none; display: flex; align-items: center; justify-content: center; background: linear-gradient(#a4a4a4, #8a8a8a); }
.idblock .sq { border-left: 1px solid #2e2e2e; }
.drop { position: relative; height: 20px; }
.drop select { display: block; width: 100%; height: 20px; padding: 2px 20px 0 7px; border: 1px solid #242424; border-radius: 5px; color: #fff; background: linear-gradient(#525252, #383838); box-shadow: 0 1px #808080; }
.drop .ud { position: absolute; right: 2px; top: 3px; pointer-events: none; }
.engine { width: 111px; margin-left: 12px; }
.logo { margin: 0 11px 0 17px; }
.stats { padding-top: 2px; white-space: nowrap; }

.work { flex: 1; display: flex; min-height: 0; }
.left { flex: 1; min-width: 0; display: flex; flex-direction: column; }
.view3d { flex: 1; display: flex; min-height: 0; }

/* Tool shelf */
.shelf { width: 160px; flex: none; display: flex; flex-direction: column; background: #727272; border-right: 2px solid #666; box-shadow: inset 0 1px #808080; }
.shelf-main { flex: 1; display: flex; }
.tabs { width: 20px; flex: none; padding: 7px 0 0 2px; background: #424242; display: flex; flex-direction: column; gap: 5px; border-left: 1px solid #666; }
.tabs button { flex: none; display: flex; align-items: center; justify-content: center; border: 1px solid #6e6e6e; border-right: 0; border-radius: 5px 0 0 5px; background: #575757; }
.tabs .on { background: #727272; border-color: #868686; }
.tabs span { writing-mode: vertical-rl; transform: rotate(180deg); line-height: 16px; white-space: nowrap; }
.panels { flex: 1; padding-left: 5px; padding-right: 4px; }
.panel h2, .operator h2 { display: flex; align-items: center; height: 24px; padding: 0 5px 0 8px; font-size: 12px; }
.panel + .panel h2 { border-top: 1px solid #484848; box-shadow: inset 0 1px #8a8a8a; }
.tri { width: 8px; height: 9px; margin-right: 4px; background: #2a2a2a; clip-path: polygon(0 0, 100% 0, 50% 100%); }
.tri.shut { clip-path: polygon(0 0, 100% 50%, 0 100%); }
.dots { width: 12px; height: 6px; margin-left: auto; position: relative; top: 1px; }
.body { padding: 8px 3px 7px; }
.stack { display: flex; flex-direction: column; gap: 1px; padding: 1px; border-radius: 5px; background: #303030; overflow: hidden; box-shadow: 0 1px #808080; }
.stack + .label { margin-top: 4px; }
.row { display: flex; gap: 1px; height: 19px; }
.row:first-child { height: 18px; }
.row button { flex: 1 1 0; display: flex; align-items: center; justify-content: space-between; padding: 1px 2px 0 7px; text-align: left; white-space: nowrap; background: linear-gradient(#a4a4a4, #8a8a8a); }
.row .half:first-child { flex: none; width: 59px; }
.stack .row:first-child button:first-child { border-top-left-radius: 4px; }
.stack .row:first-child button:last-child { border-top-right-radius: 4px; }
.stack .row:last-child button:first-child { border-bottom-left-radius: 4px; }
.stack .row:last-child button:last-child { border-bottom-right-radius: 4px; }
.row .menu { color: #fff; background: linear-gradient(#525252, #383838); }
.operator { height: 216px; flex: none; padding: 0 7px; border-top: 1px solid #5c5c5c; box-shadow: inset 0 1px #868686; }
.operator h2 { padding: 0 3px 0 5px; }
.operator .label { margin-top: 7px; padding-left: 7px; }

/* 3D viewport */
.viewport { position: relative; flex: 1; min-width: 0; background: #393939; overflow: hidden; }
.canvas { position: absolute; inset: 0; }
.view-name { position: absolute; left: 19px; top: 11px; color: #fff; }
.object-name { position: absolute; left: 69px; bottom: 5px; color: #fff; }
.expand { position: absolute; right: 0; top: 23px; width: 16px; height: 14px; border-radius: 5px 0 0 5px; background: #2c2c2c; color: #9a9a9a; font-weight: bold; line-height: 12px; }
.gizmo { position: absolute; left: 24px; bottom: 25px; width: 26px; height: 26px; border-left: 2px solid #0a0ac8; border-bottom: 2px solid #0fb40f; line-height: 12px; }
.gizmo .z { position: absolute; left: 1px; top: -12px; color: #1a1ac0; }
.gizmo .y { position: absolute; left: 26px; bottom: -1px; color: #14b414; }
.status { position: relative; height: 27px; flex: none; padding: 6px 0 0 20px; border-top: 1px solid #828282; border-bottom: 1px solid #000; }

/* Timeline */
.timeline { position: relative; height: 99px; flex: none; display: flex; flex-direction: column; }
.frames { display: block; flex: none; }
.ruler { position: relative; height: 18px; flex: none; }
.ruler svg { position: relative; display: block; top: 1px; }
.track { position: absolute; left: 4px; right: 5px; top: 1px; height: 14px; display: flex; justify-content: space-between; padding: 2px; border: 1px solid #404040; border-radius: 7px; background: linear-gradient(#8e8e8e, #757575); }
.knob { width: 8px; height: 8px; border-radius: 4px; background: #626262; }
.ruler text, .num input { font-family: "DejaVu Sans", sans-serif; font-size: 11px; }
.foot { flex: 1; padding-left: 9px; }
.foot .menus { padding-left: 13px; width: 222px; }
.group { display: flex; height: 20px; border: 1px solid #333; border-radius: 5px; overflow: hidden; flex: none; box-shadow: 0 1px #808080; }
.group button + button { border-left: 1px solid #333; }
.range { width: 40px; margin-right: 5px; }
.range .sq { flex: 1; }
.pill { display: flex; height: 20px; border: 1px solid #3a3a3a; border-radius: 10px; overflow: hidden; background: linear-gradient(#9c9c9c, #b4b4b4); box-shadow: 0 1px #808080; flex: none; }
.num { display: flex; align-items: center; flex: 1; padding: 1px 7px 0; white-space: nowrap; min-width: 0; }
.num input { flex: 1; min-width: 0; width: 20px; text-align: right; margin-right: 5px; }
.num + .num { border-left: 1px solid #3a3a3a; }
.la, .ra { width: 4px; height: 6px; flex: none; background: #606060; }
.la { margin-right: 4px; clip-path: polygon(100% 0, 100% 100%, 0 50%); }
.ra { clip-path: polygon(0 0, 100% 50%, 0 100%); }
.start { width: 117px; flex: none; }
.end { width: 109px; flex: none; }
.now { width: 87px; }
.pill + .pill { margin-left: 6px; }
.play { width: 120px; margin-left: 16px; }
.play button, .record button { flex: 1; min-width: 0; }
.sync { width: 115px; margin-left: 5px; }
.record { margin-left: 16px; width: 20px; }
.keying { position: relative; width: 171px; margin-left: 5px; }
.keyset { position: absolute; left: 3px; top: 1px; }

/* Right column */
.right { width: 255px; flex: none; display: flex; flex-direction: column; border-left: 1px solid #000; min-width: 0; overflow: hidden; }
.outliner { position: relative; height: 185px; flex: none; display: flex; flex-direction: column; border-bottom: 1px solid #000; }
.sub { height: 27px; padding-left: 9px; overflow: hidden; }
.sub .menus { padding-left: 13px; width: 104px; }
.scenes { flex: 1; }
.scenes select { border-right: 0; border-radius: 5px 0 0 5px; }
.tree { position: relative; height: 138px; flex: none; display: flex; flex-direction: column; }
.links { position: absolute; left: 0; top: 0; }
.item { display: flex; height: 20px; flex: none; }
.item:nth-of-type(even) { background: #797979; }
.item.rest { flex: 1; background: none; }
.name { flex: 1; display: flex; align-items: center; min-width: 0; }
.item.sel .name { background: #7d858c; }
.cell { width: 20px; flex: none; display: flex; align-items: center; justify-content: center; border-left: 1px solid #5c5c5c; }
.cell:last-child { width: 19px; }
.lead { width: 20px; flex: none; display: flex; align-items: center; padding-left: 3px; }
.lead.deep { width: 40px; padding-left: 23px; }
.lead.near { padding-left: 28px; }
.toggle { position: relative; width: 11px; height: 11px; border: 1px solid #111; border-radius: 6px; background: #e0e0e0; }
.toggle::before, .toggle.plus::after { content: ""; position: absolute; left: 2px; top: 4px; width: 5px; height: 1px; background: #000; }
.toggle.plus::after { left: 4px; top: 2px; width: 1px; height: 5px; }
.halo { position: relative; width: 20px; height: 20px; flex: none; display: flex; align-items: center; justify-content: center; border-radius: 10px; }
.halo.light { background: #a2a2a2; }
.halo.blue { background: #9a9ab4; }
.halo.orange { background: #b08350; }
.text { padding: 2px 0 0 1px; }
.bright .text { color: #fff; }
.sep { width: 2px; height: 12px; margin: 0 6px 0 10px; background: #555; }
.scroll { height: 14px; margin: 2px 5px 0 4px; border-radius: 7px; background: #5c5c5c; border: 1px solid #505050; }
.thumb { width: 84%; height: 12px; border-radius: 6px; background: linear-gradient(#8e8e8e, #777); box-shadow: 0 0 0 1px #3c3c3c; }

.props { position: relative; flex: 1; }
.contexts { display: flex; margin-left: 7px; height: 20px; border: 1px solid #242424; border-right: 0; border-radius: 5px 0 0 5px; overflow: hidden; }
.contexts button { width: 20px; flex: none; display: flex; align-items: center; justify-content: center; background: linear-gradient(#555, #3c3c3c); }
.contexts button + button { border-left: 1px solid #222; }
.contexts .ic { opacity: .75; }
.contexts .on { background: #5680c2; }
.contexts .on .ic { opacity: 1; }
.crumbs { display: flex; align-items: center; height: 36px; padding-left: 10px; box-shadow: inset 0 1px #828282; }
.crumbs .sc { margin: 0 5px 0 6px; }
.crumbs .cu { margin: 0 4px 0 15px; }
.crumbs .ra { background: #303030; height: 8px; }
.crumbs span { padding-top: 1px; }
.stackcol { padding: 7px 8px 0; }
.modifier { margin-top: 5px; border: 1px solid #4a4a4a; border-radius: 5px; background: #808080; }
.mod-head { display: flex; align-items: center; height: 32px; padding: 2px 4px 0; border-bottom: 1px solid #484848; }
.mod-head .mi { margin: 0 2px 0 10px; }
.mod-name { width: 28px; height: 20px; padding: 1px 0 0 7px; border: 1px solid #3a3a3a; border-radius: 5px; background: linear-gradient(#9a9a9a, #b0b0b0); }
.group button { display: flex; align-items: center; justify-content: center; background: linear-gradient(#a4a4a4, #8a8a8a); }
.toggles { margin: 0 8px; width: 80px; }
.toggles button { flex: 1; }
.toggles .on { background: #606060; }
.move { width: 36px; margin-right: 8px; }
.move button { flex: 1; min-width: 0; }
.plain { padding: 0; display: flex; }
.mod-body { padding: 9px 4px 12px; }
.pair { display: flex; gap: 8px; }
.btn { flex: 1; height: 20px; padding-top: 1px; border: 1px solid #3a3a3a; border-radius: 5px; background: linear-gradient(#a4a4a4, #8a8a8a); box-shadow: 0 1px #929292; }
.checks { display: flex; height: 95px; padding: 9px 0 0 3px; }
fieldset { margin: 0; padding: 0; border: 0; min-width: 0; }
legend { padding: 0 0 0 4px; height: 20px; line-height: 20px; }
.c1 { width: 61px; }
.c2 { width: 87px; }
.c1, .c2 { flex: none; }
.checks label { display: flex; align-items: center; height: 22px; white-space: nowrap; }
.checks input { position: relative; appearance: none; width: 14px; height: 14px; margin: 0 8px 0 0; flex: none; border: 1px solid #333; border-radius: 4px; background: linear-gradient(#454545, #585858); }
.checks input:checked::after { content: ""; position: absolute; left: 4px; top: -3px; width: 5px; height: 11px; border: solid #dcdcdc; border-width: 0 2px 2px 0; transform: rotate(42deg); }
.lit { color: #fff; }
.wide { margin-top: 1px; }
.mod-body .label { margin-top: 2px; padding-left: 7px; }
.objfield { display: flex; align-items: center; height: 20px; padding-left: 4px; border: 1px solid #3a3a3a; border-radius: 5px; background: linear-gradient(#9a9a9a, #b4b4b4); box-shadow: 0 1px #929292; }
.objfield input { flex: 1; min-width: 0; height: 18px; }
</style>
